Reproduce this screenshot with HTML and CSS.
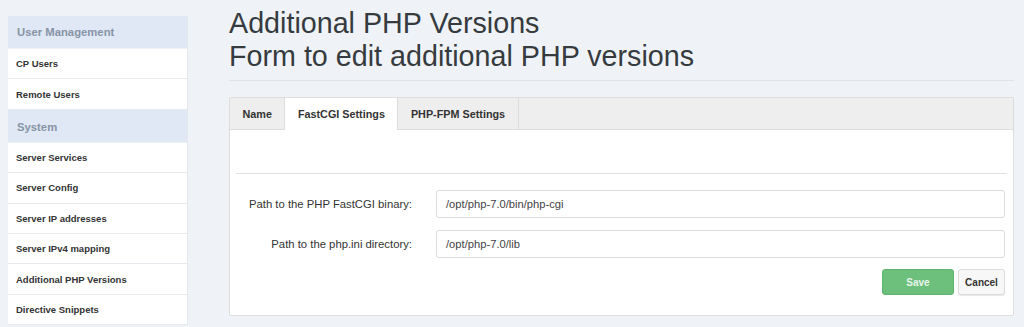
FILE: index.html
```html
<!DOCTYPE html>
<html>
<head>
<meta charset="utf-8">
<link rel="stylesheet" href="styles.css">
</head>
<body>
<div class="layout">
  <nav class="sidebar">
    <div class="sb-head first">User Management</div>
    <div class="sb-item">CP Users</div>
    <div class="sb-item">Remote Users</div>
    <div class="sb-head">System</div>
    <div class="sb-item">Server Services</div>
    <div class="sb-item">Server Config</div>
    <div class="sb-item">Server IP addresses</div>
    <div class="sb-item">Server IPv4 mapping</div>
    <div class="sb-item">Additional PHP Versions</div>
    <div class="sb-item">Directive Snippets</div>
  </nav>
  <main class="main">
    <h1 class="title">Additional PHP Versions<br>Form to edit additional PHP versions</h1>
    <div class="rule"></div>
    <div class="panel">
      <div class="tabs">
        <div class="tab">Name</div>
        <div class="tab active">FastCGI Settings</div>
        <div class="tab">PHP-FPM Settings</div>
      </div>
      <div class="panel-body">
        <div class="spacer"></div>
        <div class="divider"></div>
        <div class="form">
          <div class="row">
            <label class="label">Path to the PHP FastCGI binary:</label>
            <div class="input">/opt/php-7.0/bin/php-cgi</div>
          </div>
          <div class="row">
            <label class="label">Path to the php.ini directory:</label>
            <div class="input">/opt/php-7.0/lib</div>
          </div>
          <div class="actions">
            <button class="btn save">Save</button>
            <button class="btn cancel">Cancel</button>
          </div>
        </div>
      </div>
    </div>
  </main>
</div>
</body>
</html>
```
FILE: styles.css
```css
html, body {
  margin: 0;
  padding: 0;
  background: #eff3f7;
  font-family: "Liberation Sans", Arial, sans-serif;
}
.layout {
  display: flex;
  padding: 0 10px 0 8px;
  gap: 41px;
  align-items: flex-start;
}
.sidebar {
  width: 179px;
  flex: none;
  margin-top: 16px;
  background: #fff;
  border-right: 1px solid #e3e8ee;
}
.sb-head {
  height: 33px;
  display: flex;
  align-items: center;
  padding: 2px 0 0 9px;
  box-sizing: border-box;
  background: #dfe8f4;
  color: #8794a7;
  font-weight: bold;
  font-size: 11.3px;
  border-bottom: 1px solid #eef2f7;
}
.sb-head.first {
  height: 33px;
  padding-top: 0;
}
.sb-item {
  height: 29.4px;
  display: flex;
  align-items: center;
  padding-left: 8px;
  font-size: 9.5px;
  font-weight: bold;
  color: #333;
  border-bottom: 1px solid #e6e9ed;
}
.main {
  flex: 1;
  min-width: 0;
}
.title {
  margin: 0;
  font-weight: normal;
  font-size: 28.7px;
  line-height: 33px;
  color: #363b40;
  padding-top: 7px;
}
.rule {
  height: 1px;
  background: #dfe3e8;
  margin: 7px 0 16px;
}
.panel {
  background: #fff;
  border: 1px solid #dddddd;
  border-radius: 2px;
}
.tabs {
  display: flex;
  background: #eeeeee;
  border-bottom: 1px solid #dddddd;
  height: 31px;
}
.tab {
  display: flex;
  align-items: center;
  padding: 0 12.5px;
  font-size: 10.8px;
  font-weight: bold;
  color: #333;
  border-right: 1px solid #dddddd;
}
.tab.active {
  background: #fff;
  margin-bottom: -1px;
}
.panel-body {
  padding: 0 6px 20px;
}
.spacer {
  height: 43px;
}
.divider {
  height: 1px;
  background: #e2e2e2;
}
.form {
  padding: 16px 2px 0 0;
  display: flex;
  flex-direction: column;
  gap: 12px;
}
.row {
  display: flex;
  align-items: center;
}
.label {
  width: 176px;
  flex: none;
  text-align: right;
  font-size: 11.3px;
  color: #333;
  padding-right: 24px;
}
.input {
  flex: 1;
  height: 26px;
  border: 1px solid #dcdcdc;
  border-radius: 3px;
  display: flex;
  align-items: center;
  padding-left: 9px;
  font-size: 11.2px;
  color: #444;
}
.actions {
  display: flex;
  justify-content: flex-end;
  gap: 4px;
  margin-top: -1px;
}
.btn {
  font-family: "Liberation Sans", Arial, sans-serif;
  font-size: 10px;
  font-weight: bold;
  height: 26px;
  border-radius: 3px;
  cursor: pointer;
}
.save {
  width: 72px;
  background: #6cc07c;
  border: 1px solid #5eb46f;
  color: #e8f6ea;
}
.cancel {
  width: 47px;
  background: #f7f7f7;
  border: 1px solid #dcdcdc;
  color: #333;
  box-shadow: 0 1px 1px rgba(0,0,0,0.1);
}
```
